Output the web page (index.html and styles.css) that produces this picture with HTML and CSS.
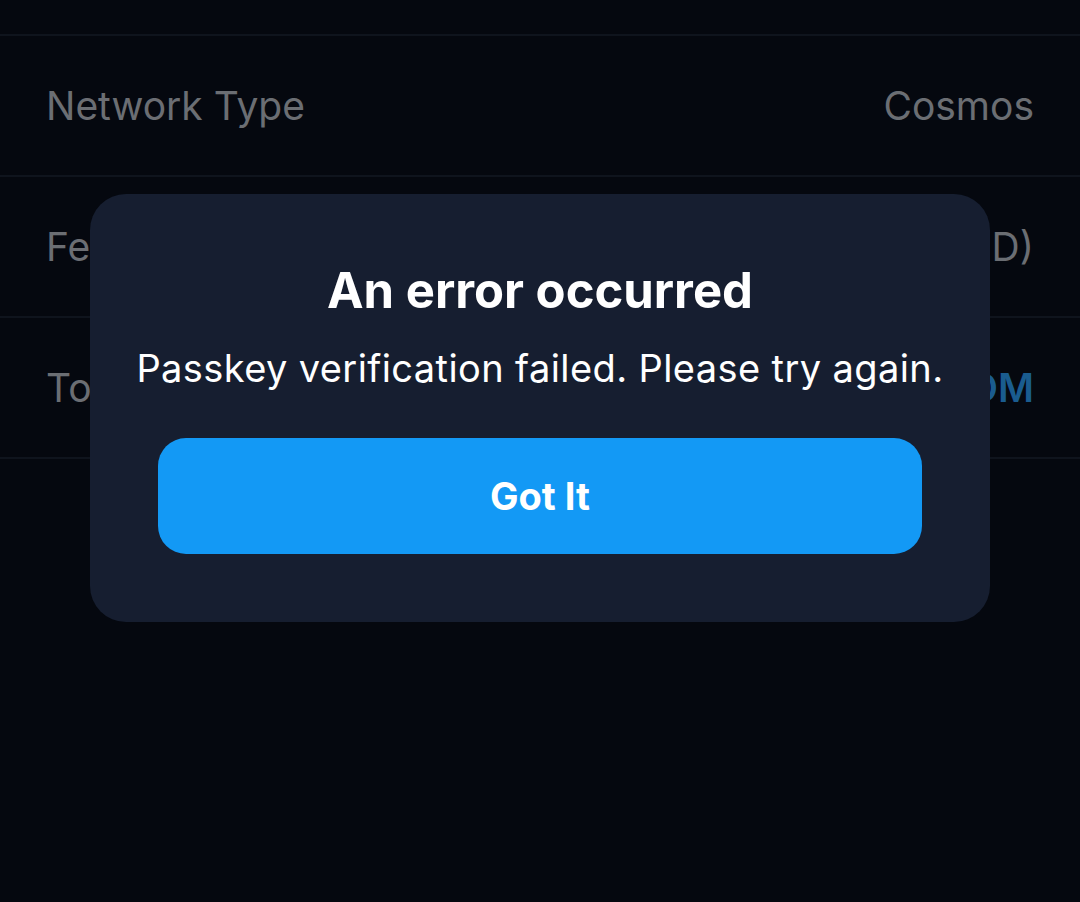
FILE: index.html
```html
<!DOCTYPE html>
<html>
<head>
<meta charset="utf-8">
<link rel="stylesheet" href="styles.css">
</head>
<body>
<div class="page">
  <div class="list">
    <div class="row"><span class="label">Network Type</span><span class="value">Cosmos</span></div>
    <div class="row"><span class="label">Fee</span><span class="value">0.0025 ATOM (&lt;$0.01 USD)</span></div>
    <div class="row"><span class="label">Total</span><span class="value accent">0.0025 ATOM</span></div>
  </div>
  <div class="overlay">
    <div class="modal">
      <h1 class="title">An error occurred</h1>
      <p class="message">Passkey verification failed. Please try again.</p>
      <button class="btn">Got It</button>
    </div>
  </div>
</div>
</body>
</html>
```
FILE: styles.css
```css
* { box-sizing: border-box; }
html, body { margin: 0; padding: 0; }
body {
  background: #05080f;
  font-family: Inter, "Noto Sans", sans-serif;
  width: 1080px;
  height: 902px;
  overflow: hidden;
}
.page {
  position: relative;
  width: 1080px;
  height: 902px;
  padding-top: 34px;
}
.list {
  border-bottom: 2px solid #0f141d;
}
.row {
  display: flex;
  justify-content: space-between;
  align-items: center;
  height: 141px;
  padding: 0 46px;
  border-top: 2px solid #0f141d;
}
.label, .value {
  font-size: 39px;
  color: #6b6e73;
}
.value.accent { color: #1a5c8f; font-weight: 600; }
.overlay {
  position: absolute;
  inset: 0;
  display: flex;
  justify-content: center;
  align-items: flex-start;
  padding-top: 194px;
}
.modal {
  width: 900px;
  height: 428px;
  background: #161e30;
  border-radius: 36px;
  display: flex;
  flex-direction: column;
  align-items: center;
  padding: 68px 40px 0;
}
.title {
  margin: 0;
  font-size: 49px;
  font-weight: 700;
  color: #ffffff;
  line-height: 1.2;
  white-space: nowrap;
}
.message {
  margin: 25px 0 0;
  font-size: 38px;
  letter-spacing: 0.4px;
  color: #ffffff;
  line-height: 1.2;
  white-space: nowrap;
}
.btn {
  margin-top: 47px;
  width: 764px;
  height: 116px;
  flex-shrink: 0;
  border: none;
  border-radius: 28px;
  background: #1399f5;
  color: #ffffff;
  font-family: inherit;
  font-size: 38px;
  font-weight: 700;
}
```
